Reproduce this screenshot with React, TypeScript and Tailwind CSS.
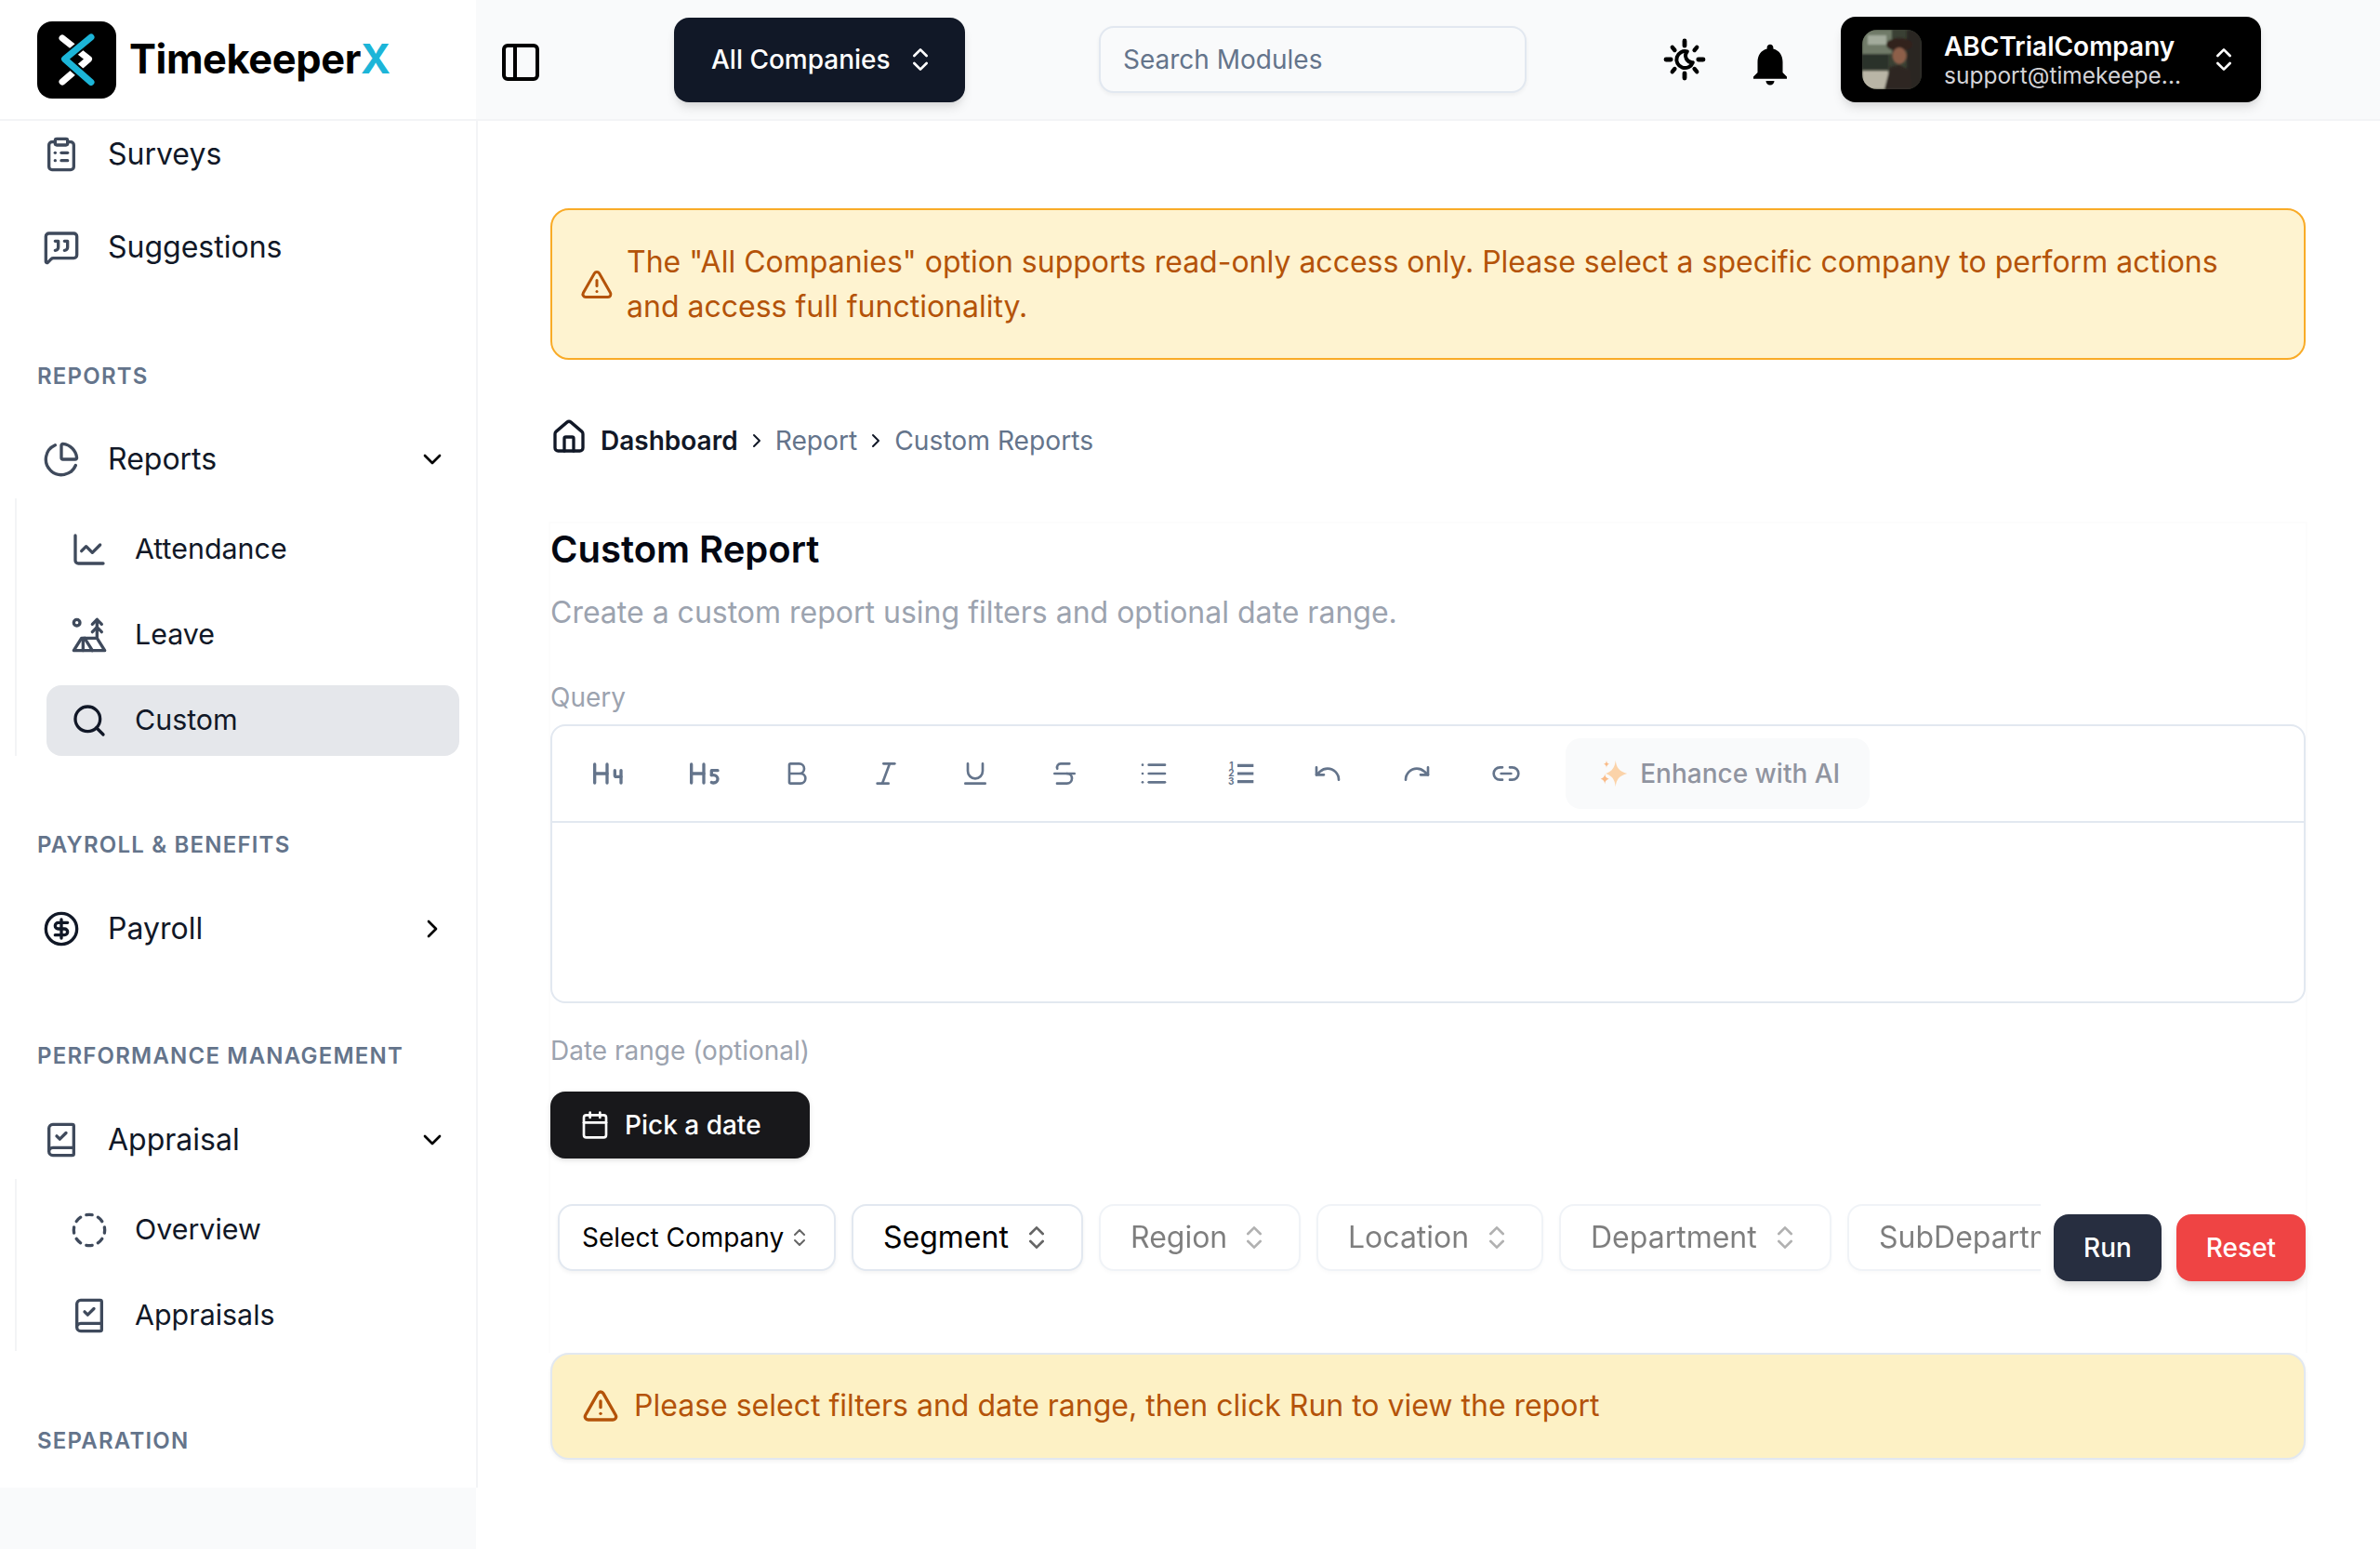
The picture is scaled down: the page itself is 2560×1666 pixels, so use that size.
import React from "react";
import {
  PanelLeft, ChevronsUpDown, ClipboardList, MessageSquareQuote, ChartPie, ChevronDown, ChevronRight,
  ChartLine, TentTree, Search, CircleDollarSign, BookCheck, CircleDashed, TriangleAlert, Home, Heading4, Heading5,
  Bold, Italic, Underline, Strikethrough, List, Undo, Redo, Link2, Calendar,
} from "lucide-react";
import { MdNotifications } from "react-icons/md";

type IconT = React.ComponentType<{ size?: number; className?: string; strokeWidth?: number }>;

function Logo() {
  return (
    <div className="w-[42.5px] h-[41.5px] rounded-lg bg-black shrink-0">
      <svg viewBox="0 0 85 83" className="w-full h-full" fill="none" strokeLinecap="round" strokeLinejoin="round">
        <path d="M27 18 L55.5 40.5 L27 65" stroke="#fff" strokeWidth="7" />
        <path d="M58 17 L29.5 40.5 L58 65.5" stroke="#000" strokeWidth="11" />
        <path d="M58 17 L29.5 40.5 L58 65.5" stroke="#1cb5d8" strokeWidth="7" />
      </svg>
    </div>
  );
}

function Avatar() {
  return (
    <svg viewBox="0 0 32 32" className="w-8 h-8 rounded-lg shrink-0">
      <defs>
        <filter id="soft"><feGaussianBlur stdDeviation="0.6" /></filter>
      </defs>
      <rect width="32" height="32" fill="#3a4034" />
      <g filter="url(#soft)">
        <rect x="0" y="0" width="16" height="13" fill="#6f7a68" />
        <rect x="3" y="3" width="10" height="5" fill="#a3ab9c" />
        <rect x="0" y="13" width="14" height="8" fill="#2c3029" />
        <rect x="0" y="22" width="14" height="10" fill="#b9b5a6" />
        <rect x="24" y="0" width="8" height="32" fill="#2a2524" />
        <ellipse cx="20" cy="8" rx="7" ry="3.5" fill="#33231f" />
        <ellipse cx="20" cy="14" rx="3.8" ry="4.5" fill="#8d5f49" />
        <path d="M12 32 L15 20 L20 19 L26 22 L27 32 Z" fill="#2e2620" />
      </g>
    </svg>
  );
}

function SunCrescent() {
  return (
    <svg viewBox="0 0 24 24" className="w-6 h-6 ml-[73px] shrink-0 text-black" fill="none" stroke="currentColor" strokeWidth="2" strokeLinecap="round" strokeLinejoin="round">
      <path d="M12 2v2.6M12 19.4V22M2 12h2.6M19.4 12H22" strokeWidth="2.4" />
      <path d="M5.4 5.4l1.3 1.6M18.6 5.4l-1.3 1.6M5.4 18.6l1.3-1.6M18.6 18.6l-1.3-1.6" strokeWidth="2.2" />
      <path d="M13.4 7.7 A4.5 4.5 0 1 0 16.4 13.6 A3.6 3.6 0 0 1 13.4 7.7 Z" />
    </svg>
  );
}

function Header() {
  return (
    <header className="h-[65px] bg-[#f9fafb] flex items-center shrink-0 border-b border-[#f3f4f6] relative">
      <PanelLeft size={24} strokeWidth={2} className="text-black ml-3 mt-[3px] shrink-0" />
      <div className="ml-[70.5px] w-[156.5px] h-[45.5px] rounded-lg bg-[#111827] shadow-md flex items-center pl-5 gap-2 text-white text-sm font-medium shrink-0">
        <span>All Companies</span>
        <ChevronsUpDown size={16} />
      </div>
      <div className="ml-[72px] w-[230px] h-9 mb-[0.5px] rounded-lg border border-[#e2e8f0] bg-[#f9fafb] shadow-xs flex items-center px-3 text-sm text-[#64748b] shrink-0">
        Search Modules
      </div>
      <SunCrescent />
      <MdNotifications size={27} className="ml-[20.5px] text-black shrink-0 mt-[5px]" />
      <div className="ml-[24.5px] w-[226px] h-[46px] rounded-lg bg-black shadow-md flex items-center pl-[11.5px] pr-3 text-white shrink-0">
        <Avatar />
        <div className="ml-3 flex-1 min-w-0 flex flex-col">
          <span className="text-sm font-semibold leading-[18px]">ABCTrialCompany</span>
          <span className="text-[12.25px] leading-[16px] -mt-[1.5px] text-[#d4d4d8]">support@timekeepe...</span>
        </div>
        <ChevronsUpDown size={16} className="shrink-0" />
      </div>
    </header>
  );
}

function Label({ children, className }: { children: React.ReactNode; className: string }) {
  return <div className={"ml-5 text-xs leading-4 font-semibold uppercase tracking-wider text-[#64748b] " + className}>{children}</div>;
}

function Row({ icon: Icon, label, chev, className = "", iconClass = "text-[#3f4a5c]" }: { icon: IconT; label: string; chev?: "down" | "right"; className?: string; iconClass?: string }) {
  return (
    <div className={"h-[42px] flex items-center pl-[23px] pr-[15.5px] gap-[15px] text-base text-[#111827] " + className}>
      <Icon size={20} className={iconClass + " shrink-0"} />
      <span className="flex-1">{label}</span>
      {chev === "down" && <ChevronDown size={16} className="text-black" />}
      {chev === "right" && <ChevronRight size={16} className="text-black" />}
    </div>
  );
}

function Sub({ icon: Icon, label, active }: { icon: IconT; label: string; active?: boolean }) {
  return (
    <div className={"h-[38px] rounded-lg flex items-center pl-[13px] gap-[14.5px] text-[15.2px] text-[#111827] " + (active ? "bg-[#e5e7eb]" : "")}>
      <Icon size={20} className={(active ? "text-[#111827]" : "text-[#3f4a5c]") + " shrink-0"} />
      <span>{label}</span>
    </div>
  );
}

function SubList({ children }: { children: React.ReactNode }) {
  return <div className="ml-2 mr-[9px] border-l border-[#f3f4f6] pl-4 pt-[8.5px] flex flex-col gap-2">{children}</div>;
}

function Sidebar() {
  return (
    <aside className="w-[257px] shrink-0 flex flex-col h-full">
      <div className="h-[65px] shrink-0 border-b border-[#f3f4f6] flex items-center pl-5 gap-[7px]">
        <Logo />
        <span className="text-[21.7px] font-bold text-black tracking-[-0.2px]">
          Timekeeper<span className="text-[#1cb5d8]">X</span>
        </span>
      </div>
      <nav className="flex-1 overflow-hidden border-r border-[#f3f4f6]">
        <Row icon={ClipboardList} label="Surveys" className="-mt-[3px]" />
        <Row icon={MessageSquareQuote} label="Suggestions" className="mt-2" />
        <Label className="mt-[40.5px]">Reports</Label>
        <Row icon={ChartPie} label="Reports" chev="down" className="mt-[15.5px]" />
        <SubList>
          <Sub icon={ChartLine} label="Attendance" />
          <Sub icon={TentTree} label="Leave" />
          <Sub icon={Search} label="Custom" active />
        </SubList>
        <Label className="mt-10">Payroll &amp; Benefits</Label>
        <Row icon={CircleDollarSign} label="Payroll" chev="right" className="mt-4" iconClass="text-[#111827]" />
        <Label className="mt-[39.5px]">Performance Management</Label>
        <Row icon={BookCheck} label="Appraisal" chev="down" className="mt-4" />
        <SubList>
          <Sub icon={CircleDashed} label="Overview" />
          <Sub icon={BookCheck} label="Appraisals" />
        </SubList>
        <Label className="mt-[40.5px]">Separation</Label>
      </nav>
      <div className="h-[33px] w-[256px] shrink-0 bg-[#f9fafb]" />
    </aside>
  );
}

function Tool({ icon: Icon, size = 16, className = "" }: { icon: IconT; size?: number; className?: string }) {
  return (
    <div className={"h-8 px-3.5 flex items-center text-[#64748b] " + className}>
      <Icon size={size} />
    </div>
  );
}

function NumberedList({ size = 16 }: { size?: number }) {
  return (
    <svg viewBox="0 0 24 24" width={size} height={size} fill="none" stroke="currentColor" strokeWidth="2.4" strokeLinecap="butt">
      <path d="M9 5.5h13M9 12h13M9 18.5h13" />
      <g fill="currentColor" stroke="none" fontSize="7.5" fontWeight="700" textAnchor="middle" fontFamily="Inter, sans-serif">
        <text x="4" y="8">1</text>
        <text x="4" y="14.5">2</text>
        <text x="4" y="21">3</text>
      </g>
    </svg>
  );
}

function Sparkles() {
  return (
    <svg viewBox="0 0 18 18" className="w-4 h-4 shrink-0 opacity-60" fill="#fdba74">
      <path d="M10 1 C10.5 5.5 12 7.5 17 9 C12 10.5 10.5 12.5 10 17 C9.5 12.5 8 10.5 4 9 C8 7.5 9.5 5.5 10 1 Z" />
      <path d="M3.5 9 C3.7 11 4.3 11.6 6 12.2 C4.3 12.8 3.7 13.5 3.5 15.5 C3.3 13.5 2.7 12.8 1 12.2 C2.7 11.6 3.3 11 3.5 9 Z" fill="#fb923c" />
      <path d="M4.5 1 C4.6 2.4 5 2.9 6.2 3.3 C5 3.7 4.6 4.2 4.5 5.6 C4.4 4.2 4 3.7 2.8 3.3 C4 2.9 4.4 2.4 4.5 1 Z" fill="#fb923c" />
    </svg>
  );
}

function Editor() {
  return (
    <div className="mt-[4.5px] h-[150px] rounded-lg border border-[#e2e8f0]">
      <div className="h-[52px] border-b border-[#e2e8f0] flex items-center pl-[5.5px] gap-1">
        <Tool icon={Heading4} size={20} />
        <Tool icon={Heading5} size={20} />
        <Tool icon={Bold} />
        <Tool icon={Italic} />
        <Tool icon={Underline} />
        <Tool icon={Strikethrough} />
        <Tool icon={List} />
        <Tool icon={NumberedList} className="-ml-[0.8px]" />
        <Tool icon={Undo} className="-ml-[1.6px]" />
        <Tool icon={Redo} />
        <Tool icon={Link2} />
        <div className="ml-1.5 w-[163.5px] h-[38px] rounded-lg bg-[#f9fafb] flex items-center pl-[18px] gap-1.5 text-sm font-medium text-[#9094a0]">
          <Sparkles />
          <span>Enhance with AI</span>
        </div>
      </div>
    </div>
  );
}

function Filter({ label, w, small, dim }: { label: string; w: string; small?: boolean; dim?: boolean }) {
  return (
    <div className={"h-9 shrink-0 rounded-lg border border-[#e2e8f0] bg-white shadow-xs flex items-center justify-between text-black " + w + (small ? " text-sm pl-3 pr-[12.5px]" : " text-base px-4") + (dim ? " opacity-50" : "")}>
      <span className="whitespace-nowrap">{label}</span>
      <ChevronsUpDown size={small ? 12 : 16} className="shrink-0 opacity-60" />
    </div>
  );
}

function App() {
  return (
    <div className="[zoom:2] w-[1280px] h-[833px] overflow-hidden bg-white flex [font-family:Inter,sans-serif]">
      <Sidebar />
      <main className="flex-1 min-w-0 -ml-px flex flex-col">
        <Header />
        <div className="px-10 pt-[47px]">
          <div className="rounded-[10px] border border-[#f9ab27] bg-[#fef3d0] px-4 h-[81.5px] flex items-center gap-[7px] text-base leading-6 text-[#b45309]">
            <TriangleAlert size={18} className="shrink-0 -ml-px" />
            <p>The "All Companies" option supports read-only access only. Please select a specific company to perform actions and access full functionality.</p>
          </div>
          <div className="mt-[33.7px] h-5 flex items-center text-[14.1px] text-[#64748b]">
            <Home size={20} className="text-[#111827] mb-1 mr-[7px]" />
            <span className="font-semibold text-sm text-[#111827]">Dashboard</span>
            <ChevronRight size={12} className="mx-1 text-[#111827]" />
            <span>Report</span>
            <ChevronRight size={12} className="mx-1 text-[#111827]" />
            <span>Custom Reports</span>
          </div>
          <section className="mt-[33.3px] -mx-px border border-b-0 border-[#fcfcfc] pb-[38.5px]">
            <h1 className="text-xl leading-7 font-semibold text-[#030712]">Custom Report</h1>
            <p className="mt-2 text-base leading-6 text-[#9ca3af]">Create a custom report using filters and optional date range.</p>
            <div className="mt-[23.5px] text-sm leading-5 text-[#9ca3af]">Query</div>
            <Editor />
            <div className="mt-[15.5px] text-sm leading-5 text-[#9ca3af]">Date range (optional)</div>
            <div className="mt-3 w-[139.5px] h-9 rounded-lg bg-[#18181b] shadow-sm flex items-center pl-4 gap-2 text-sm font-medium text-white">
              <Calendar size={16} className="shrink-0" />
              <span>Pick a date</span>
            </div>
            <div className="mt-[24.5px] flex items-start gap-2">
              <div className="w-[801.5px] overflow-hidden flex gap-[8.5px] pl-1 pb-1 shrink-0">
                <Filter label="Select Company" w="w-[149.5px]" small />
                <Filter label="Segment" w="w-[124.5px]" />
                <Filter label="Region" w="w-[108.5px]" dim />
                <Filter label="Location" w="w-[122px]" dim />
                <Filter label="Department" w="w-[146.5px]" dim />
                <Filter label="SubDepartment" w="w-[170px]" dim />
              </div>
              <div className="mt-[5.5px] -ml-px w-[58px] h-9 rounded-lg bg-[#272e40] shadow-md flex items-center justify-center text-sm font-medium text-white shrink-0">Run</div>
              <div className="mt-[5.5px] w-[69.5px] h-9 rounded-lg bg-[#ef4444] shadow-md flex items-center justify-center text-sm font-medium text-white shrink-0">Reset</div>
            </div>
          </section>
          <div className="h-[57.5px] rounded-[10px] border border-[#e2e8f0] bg-[#fdf1c5] shadow-xs pl-4 flex items-center gap-2 text-base text-[#b45309]">
            <TriangleAlert size={20} className="shrink-0" />
            <span>Please select filters and date range, then click Run to view the report</span>
          </div>
        </div>
      </main>
    </div>
  );
}

export default App;
